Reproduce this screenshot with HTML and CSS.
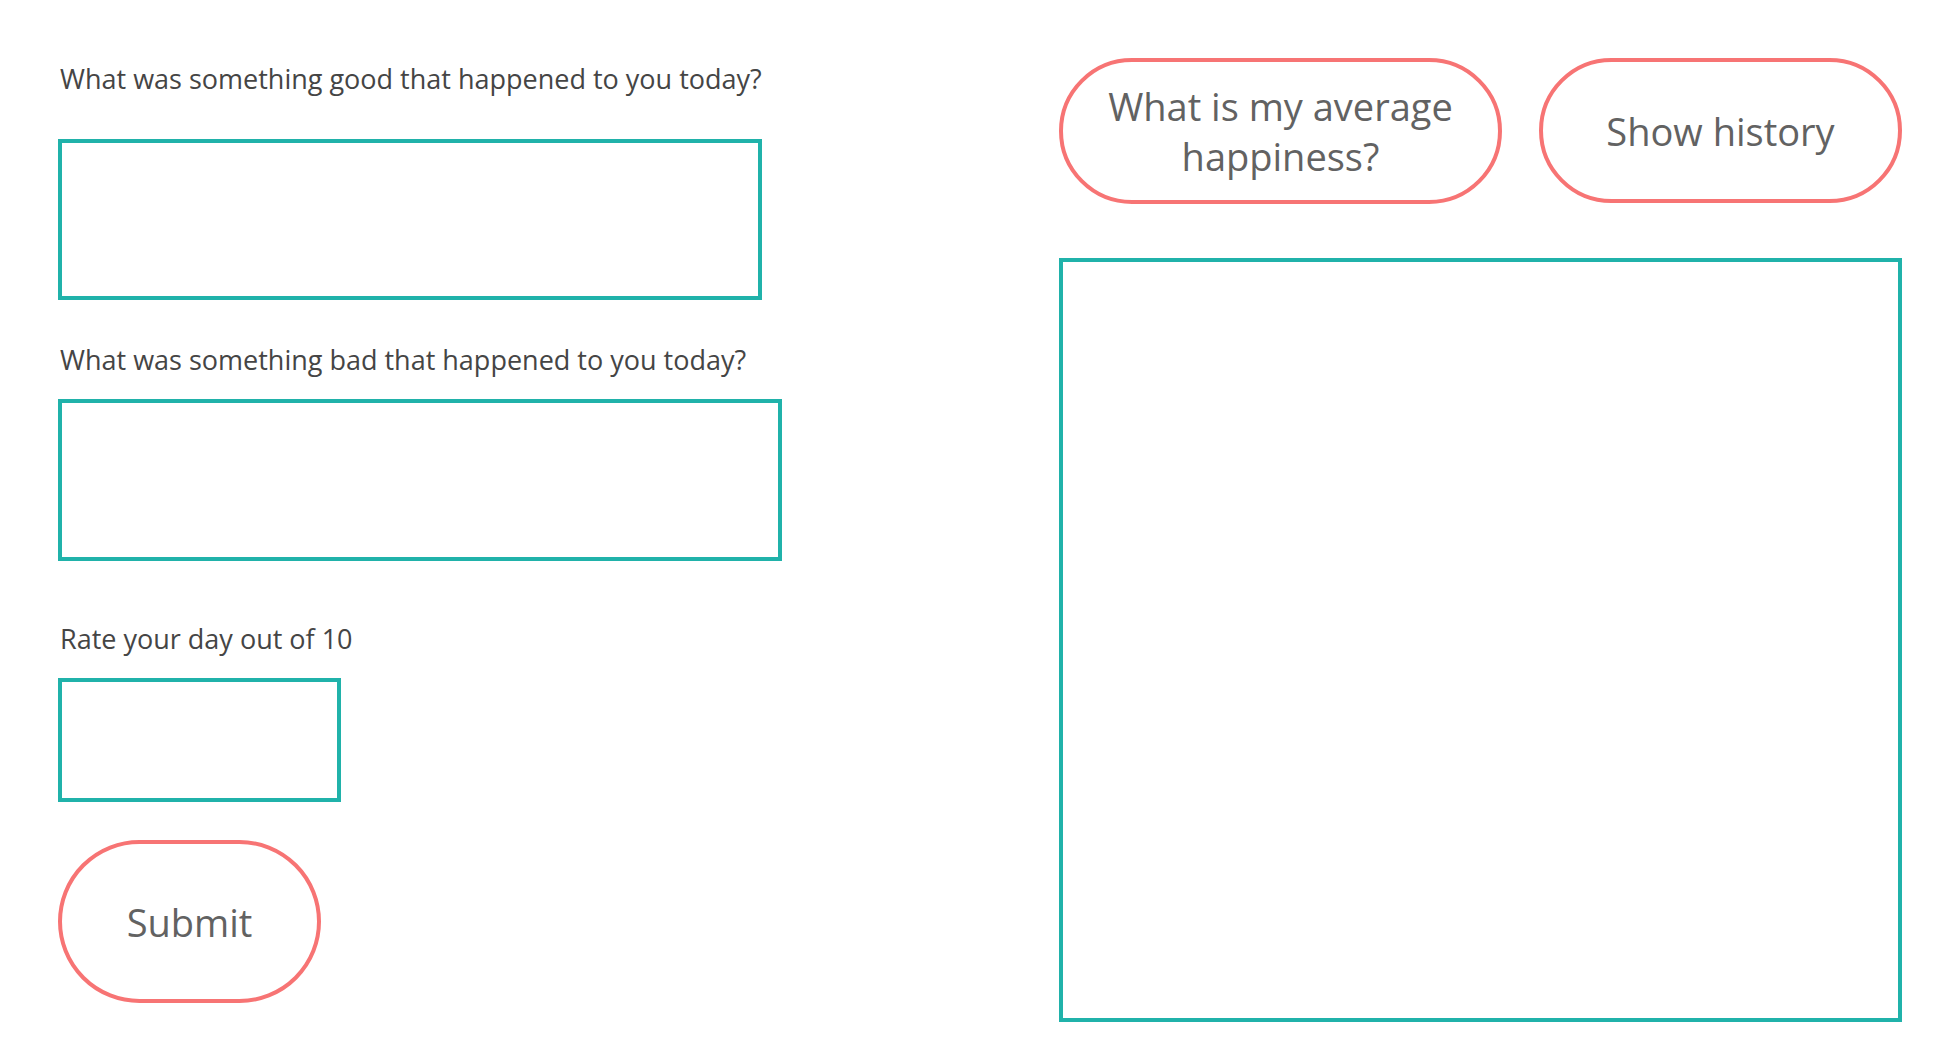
FILE: index.html
```html
<!DOCTYPE html>
<html lang="en">
<head>
<meta charset="utf-8">
<title>Happiness journal</title>
<link rel="stylesheet" href="styles.css">
</head>
<body>
<main class="page">
  <section class="entry">
    <label class="label label-first" for="good">What was something good that happened to you today?</label>
    <textarea id="good" class="field field-good"></textarea>
    <label class="label label-second" for="bad">What was something bad that happened to you today?</label>
    <textarea id="bad" class="field field-bad"></textarea>
    <label class="label label-third" for="rate">Rate your day out of 10</label>
    <input id="rate" class="field field-rate" type="text">
    <button class="pill submit" type="button">Submit</button>
  </section>
  <section class="results">
    <div class="actions">
      <button class="pill avg" type="button">What is my average happiness?</button>
      <button class="pill history" type="button">Show history</button>
    </div>
    <div class="output"></div>
  </section>
</main>
</body>
</html>
```

FILE: styles.css
```css
html, body {
  margin: 0;
  padding: 0;
  background: #ffffff;
}

body {
  font-family: "Open Sans", "Noto Sans", sans-serif;
  color: #444444;
}

.page {
  display: flex;
  padding: 0 0 0 58px;
}

.entry {
  width: 1001px;
  display: flex;
  flex-direction: column;
  align-items: flex-start;
}

.label {
  display: block;
  font-size: 27px;
  line-height: 36px;
  color: #454545;
  padding-left: 2px;
}

.label-first { margin-top: 61px; }
.label-second { margin-top: 42px; }
.label-third { margin-top: 60px; }

.field {
  box-sizing: border-box;
  border: 4px solid #20b2aa;
  border-radius: 0;
  background: #fff;
  outline: none;
  resize: none;
  margin: 0;
  padding: 0;
  font-family: inherit;
  font-size: 20px;
}

.field-good {
  width: 704px;
  height: 161px;
  margin-top: 42px;
}

.field-bad {
  width: 724px;
  height: 162px;
  margin-top: 21px;
}

.field-rate {
  width: 283px;
  height: 124px;
  margin-top: 21px;
}

.pill {
  box-sizing: border-box;
  border: 4px solid #f77474;
  border-radius: 82px;
  background: #fff;
  color: #626262;
  font-family: "Open Sans", "Noto Sans", sans-serif;
  font-size: 38px;
  line-height: 50px;
  text-align: center;
  padding: 0;
  cursor: pointer;
}

.submit {
  width: 263px;
  height: 163px;
  margin-top: 38px;
}

.results {
  width: 843px;
  display: flex;
  flex-direction: column;
}

.actions {
  display: flex;
  gap: 37px;
  margin-top: 58px;
}

.avg {
  width: 443px;
  height: 146px;
  padding: 0 40px;
}

.history {
  width: 363px;
  height: 145px;
}

.output {
  box-sizing: border-box;
  margin-top: 54px;
  width: 843px;
  height: 764px;
  border: 4px solid #20b2aa;
}
```
